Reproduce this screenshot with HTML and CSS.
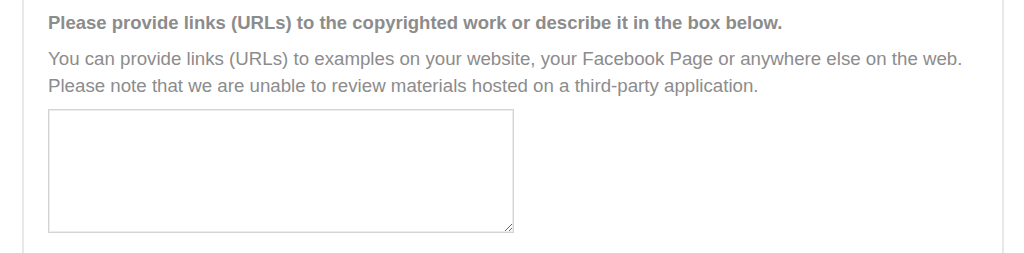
FILE: index.html
```html
<!DOCTYPE html>
<html>
<head>
<meta charset="utf-8">
<link rel="stylesheet" href="styles.css">
</head>
<body>
<div class="panel">
  <p class="heading">Please provide links (URLs) to the copyrighted work or describe it in the box below.</p>
  <p class="desc">You can provide links (URLs) to examples on your website, your Facebook Page or anywhere else on the web. Please note that we are unable to review materials hosted on a third-party application.</p>
  <textarea class="box"></textarea>
</div>
</body>
</html>
```
FILE: styles.css
```css
html, body {
  margin: 0;
  padding: 0;
  background: #fff;
  height: 100%;
  overflow: hidden;
}
.panel {
  margin-left: 22px;
  width: 982px;
  height: 253px;
  border-left: 2px solid #e8e8e8;
  border-right: 2px solid #e8e8e8;
  padding: 12px 24px 0 24px;
  box-sizing: border-box;
  font-family: "Liberation Sans", Arial, sans-serif;
  color: #8c8c8c;
}
.heading {
  margin: 0;
  font-size: 18.5px;
  font-weight: bold;
  line-height: 22px;
}
.desc {
  margin: 11px 0 0 0;
  font-size: 18.7px;
  line-height: 27px;
  width: 930px;
}
.box {
  display: block;
  margin-top: 10px;
  width: 466px;
  height: 124px;
  box-sizing: border-box;
  border: 1px solid #d4d4d4;
  box-shadow: inset 0 0 0 1px #ececec;
  padding: 4px;
  resize: both;
}
```
